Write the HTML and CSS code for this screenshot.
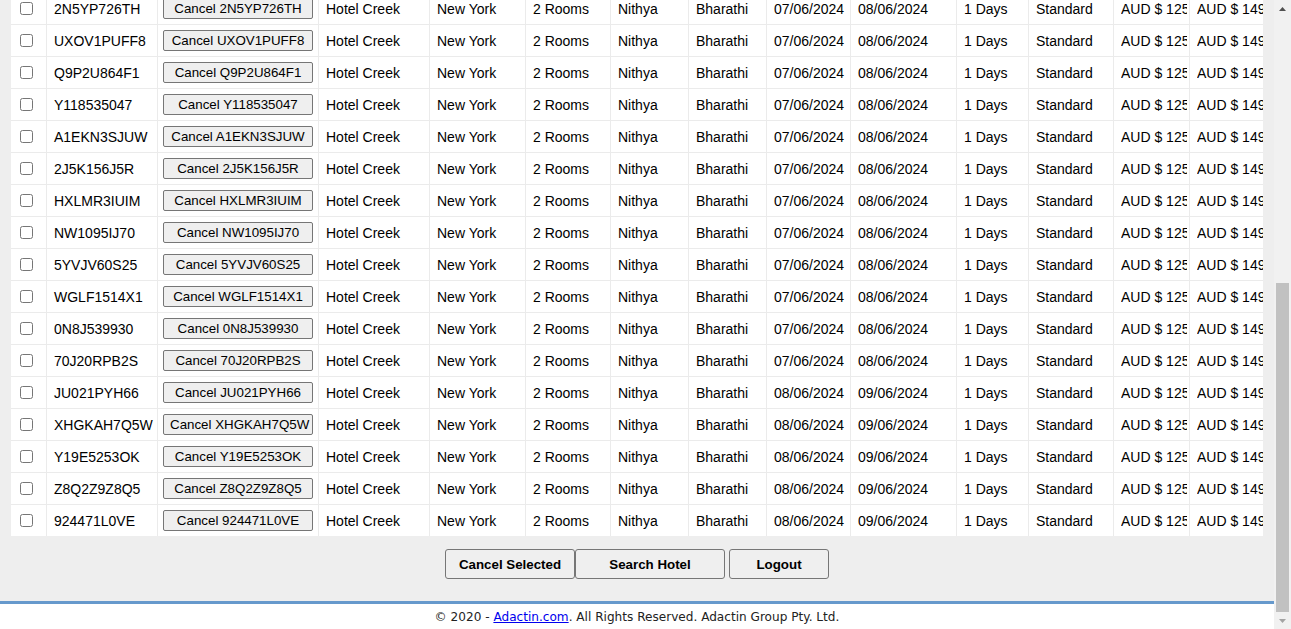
FILE: index.html
```html
<!DOCTYPE html>
<html lang="en">
<head>
<meta charset="utf-8">
<title>Booked Itinerary</title>
<link rel="stylesheet" href="styles.css">
</head>
<body>
<div class="viewport">
  <div class="page">
    <div class="results">
      <div class="table-clip">
        <table class="grid">
          <tbody>
            <tr><td class="chk-cell"><input type="checkbox" class="chk"></td><td>2N5YP726TH</td><td class="btn-cell"><button class="cancel">Cancel 2N5YP726TH</button></td><td>Hotel Creek</td><td>New York</td><td>2 Rooms</td><td>Nithya</td><td>Bharathi</td><td>07/06/2024</td><td>08/06/2024</td><td>1 Days</td><td>Standard</td><td><span class="clip">AUD $ 125</span></td><td><span class="clip">AUD $ 149</span></td></tr>
            <tr><td class="chk-cell"><input type="checkbox" class="chk"></td><td>UXOV1PUFF8</td><td class="btn-cell"><button class="cancel">Cancel UXOV1PUFF8</button></td><td>Hotel Creek</td><td>New York</td><td>2 Rooms</td><td>Nithya</td><td>Bharathi</td><td>07/06/2024</td><td>08/06/2024</td><td>1 Days</td><td>Standard</td><td><span class="clip">AUD $ 125</span></td><td><span class="clip">AUD $ 149</span></td></tr>
            <tr><td class="chk-cell"><input type="checkbox" class="chk"></td><td>Q9P2U864F1</td><td class="btn-cell"><button class="cancel">Cancel Q9P2U864F1</button></td><td>Hotel Creek</td><td>New York</td><td>2 Rooms</td><td>Nithya</td><td>Bharathi</td><td>07/06/2024</td><td>08/06/2024</td><td>1 Days</td><td>Standard</td><td><span class="clip">AUD $ 125</span></td><td><span class="clip">AUD $ 149</span></td></tr>
            <tr><td class="chk-cell"><input type="checkbox" class="chk"></td><td>Y118535047</td><td class="btn-cell"><button class="cancel">Cancel Y118535047</button></td><td>Hotel Creek</td><td>New York</td><td>2 Rooms</td><td>Nithya</td><td>Bharathi</td><td>07/06/2024</td><td>08/06/2024</td><td>1 Days</td><td>Standard</td><td><span class="clip">AUD $ 125</span></td><td><span class="clip">AUD $ 149</span></td></tr>
            <tr><td class="chk-cell"><input type="checkbox" class="chk"></td><td>A1EKN3SJUW</td><td class="btn-cell"><button class="cancel">Cancel A1EKN3SJUW</button></td><td>Hotel Creek</td><td>New York</td><td>2 Rooms</td><td>Nithya</td><td>Bharathi</td><td>07/06/2024</td><td>08/06/2024</td><td>1 Days</td><td>Standard</td><td><span class="clip">AUD $ 125</span></td><td><span class="clip">AUD $ 149</span></td></tr>
            <tr><td class="chk-cell"><input type="checkbox" class="chk"></td><td>2J5K156J5R</td><td class="btn-cell"><button class="cancel">Cancel 2J5K156J5R</button></td><td>Hotel Creek</td><td>New York</td><td>2 Rooms</td><td>Nithya</td><td>Bharathi</td><td>07/06/2024</td><td>08/06/2024</td><td>1 Days</td><td>Standard</td><td><span class="clip">AUD $ 125</span></td><td><span class="clip">AUD $ 149</span></td></tr>
            <tr><td class="chk-cell"><input type="checkbox" class="chk"></td><td>HXLMR3IUIM</td><td class="btn-cell"><button class="cancel">Cancel HXLMR3IUIM</button></td><td>Hotel Creek</td><td>New York</td><td>2 Rooms</td><td>Nithya</td><td>Bharathi</td><td>07/06/2024</td><td>08/06/2024</td><td>1 Days</td><td>Standard</td><td><span class="clip">AUD $ 125</span></td><td><span class="clip">AUD $ 149</span></td></tr>
            <tr><td class="chk-cell"><input type="checkbox" class="chk"></td><td>NW1095IJ70</td><td class="btn-cell"><button class="cancel">Cancel NW1095IJ70</button></td><td>Hotel Creek</td><td>New York</td><td>2 Rooms</td><td>Nithya</td><td>Bharathi</td><td>07/06/2024</td><td>08/06/2024</td><td>1 Days</td><td>Standard</td><td><span class="clip">AUD $ 125</span></td><td><span class="clip">AUD $ 149</span></td></tr>
            <tr><td class="chk-cell"><input type="checkbox" class="chk"></td><td>5YVJV60S25</td><td class="btn-cell"><button class="cancel">Cancel 5YVJV60S25</button></td><td>Hotel Creek</td><td>New York</td><td>2 Rooms</td><td>Nithya</td><td>Bharathi</td><td>07/06/2024</td><td>08/06/2024</td><td>1 Days</td><td>Standard</td><td><span class="clip">AUD $ 125</span></td><td><span class="clip">AUD $ 149</span></td></tr>
            <tr><td class="chk-cell"><input type="checkbox" class="chk"></td><td>WGLF1514X1</td><td class="btn-cell"><button class="cancel">Cancel WGLF1514X1</button></td><td>Hotel Creek</td><td>New York</td><td>2 Rooms</td><td>Nithya</td><td>Bharathi</td><td>07/06/2024</td><td>08/06/2024</td><td>1 Days</td><td>Standard</td><td><span class="clip">AUD $ 125</span></td><td><span class="clip">AUD $ 149</span></td></tr>
            <tr><td class="chk-cell"><input type="checkbox" class="chk"></td><td>0N8J539930</td><td class="btn-cell"><button class="cancel">Cancel 0N8J539930</button></td><td>Hotel Creek</td><td>New York</td><td>2 Rooms</td><td>Nithya</td><td>Bharathi</td><td>07/06/2024</td><td>08/06/2024</td><td>1 Days</td><td>Standard</td><td><span class="clip">AUD $ 125</span></td><td><span class="clip">AUD $ 149</span></td></tr>
            <tr><td class="chk-cell"><input type="checkbox" class="chk"></td><td>70J20RPB2S</td><td class="btn-cell"><button class="cancel">Cancel 70J20RPB2S</button></td><td>Hotel Creek</td><td>New York</td><td>2 Rooms</td><td>Nithya</td><td>Bharathi</td><td>07/06/2024</td><td>08/06/2024</td><td>1 Days</td><td>Standard</td><td><span class="clip">AUD $ 125</span></td><td><span class="clip">AUD $ 149</span></td></tr>
            <tr><td class="chk-cell"><input type="checkbox" class="chk"></td><td>JU021PYH66</td><td class="btn-cell"><button class="cancel">Cancel JU021PYH66</button></td><td>Hotel Creek</td><td>New York</td><td>2 Rooms</td><td>Nithya</td><td>Bharathi</td><td>08/06/2024</td><td>09/06/2024</td><td>1 Days</td><td>Standard</td><td><span class="clip">AUD $ 125</span></td><td><span class="clip">AUD $ 149</span></td></tr>
            <tr><td class="chk-cell"><input type="checkbox" class="chk"></td><td>XHGKAH7Q5W</td><td class="btn-cell"><button class="cancel">Cancel XHGKAH7Q5W</button></td><td>Hotel Creek</td><td>New York</td><td>2 Rooms</td><td>Nithya</td><td>Bharathi</td><td>08/06/2024</td><td>09/06/2024</td><td>1 Days</td><td>Standard</td><td><span class="clip">AUD $ 125</span></td><td><span class="clip">AUD $ 149</span></td></tr>
            <tr><td class="chk-cell"><input type="checkbox" class="chk"></td><td>Y19E5253OK</td><td class="btn-cell"><button class="cancel">Cancel Y19E5253OK</button></td><td>Hotel Creek</td><td>New York</td><td>2 Rooms</td><td>Nithya</td><td>Bharathi</td><td>08/06/2024</td><td>09/06/2024</td><td>1 Days</td><td>Standard</td><td><span class="clip">AUD $ 125</span></td><td><span class="clip">AUD $ 149</span></td></tr>
            <tr><td class="chk-cell"><input type="checkbox" class="chk"></td><td>Z8Q2Z9Z8Q5</td><td class="btn-cell"><button class="cancel">Cancel Z8Q2Z9Z8Q5</button></td><td>Hotel Creek</td><td>New York</td><td>2 Rooms</td><td>Nithya</td><td>Bharathi</td><td>08/06/2024</td><td>09/06/2024</td><td>1 Days</td><td>Standard</td><td><span class="clip">AUD $ 125</span></td><td><span class="clip">AUD $ 149</span></td></tr>
            <tr><td class="chk-cell"><input type="checkbox" class="chk"></td><td>924471L0VE</td><td class="btn-cell"><button class="cancel">Cancel 924471L0VE</button></td><td>Hotel Creek</td><td>New York</td><td>2 Rooms</td><td>Nithya</td><td>Bharathi</td><td>08/06/2024</td><td>09/06/2024</td><td>1 Days</td><td>Standard</td><td><span class="clip">AUD $ 125</span></td><td><span class="clip">AUD $ 149</span></td></tr>
          </tbody>
        </table>
      </div>
    </div>
    <div class="actions">
      <button class="act act-cancel">Cancel Selected</button>
      <button class="act act-search">Search Hotel</button>
      <button class="act act-logout">Logout</button>
    </div>
    <footer class="footer">© 2020 - <a href="#">Adactin.com</a>. All Rights Reserved. Adactin Group Pty. Ltd.</footer>
  </div>
  <div class="scrollbar">
    <div class="sb-btn"><svg width="7" height="4" viewBox="0 0 7 4"><polygon points="0,4 3.5,0 7,4" fill="#505050"/></svg></div>
    <div class="sb-track"><div class="sb-thumb"></div></div>
    <div class="sb-btn"><svg width="7" height="4" viewBox="0 0 7 4"><polygon points="0,0 7,0 3.5,4" fill="#a3a3a3"/></svg></div>
  </div>
</div>
</body>
</html>
```

FILE: styles.css
```css
html, body {
  margin: 0;
  padding: 0;
  height: 100%;
  overflow: hidden;
}

body {
  font-family: "Liberation Sans", Arial, sans-serif;
  background: #eeeeee;
}

.viewport {
  display: flex;
  width: 1291px;
  height: 629px;
}

.page {
  width: 1274px;
  display: flex;
  flex-direction: column;
  background: #eeeeee;
}

.results {
  flex: 1;
  min-height: 0;
  overflow: hidden;
  display: flex;
  flex-direction: column;
  justify-content: flex-end;
  padding: 0 11px;
}

.table-clip {
  flex: none;
  width: 1252px;
  overflow: hidden;
}

.grid {
  table-layout: fixed;
  width: 1254px;
  border-collapse: separate;
  border-spacing: 0;
  background: #ffffff;
  font-size: 14px;
  color: #000000;
}

.grid td {
  box-sizing: border-box;
  border-top: 1px solid #ebebeb;
  padding: 2px 2px 0 7px;
  line-height: 29px;
  white-space: nowrap;
  overflow: hidden;
  vertical-align: top;
}

.grid td + td {
  border-left: 1px solid #ebebeb;
}

.grid td:nth-child(1) { width: 35px; }
.grid td:nth-child(2) { width: 111px; }
.grid td:nth-child(3) { width: 161px; }
.grid td:nth-child(4) { width: 111px; }
.grid td:nth-child(5) { width: 96px; }
.grid td:nth-child(6) { width: 85px; }
.grid td:nth-child(7) { width: 78px; }
.grid td:nth-child(8) { width: 78px; }
.grid td:nth-child(9) { width: 84px; }
.grid td:nth-child(10) { width: 106px; }
.grid td:nth-child(11) { width: 72px; }
.grid td:nth-child(12) { width: 85px; }
.grid td:nth-child(13) { width: 76px; }
.grid td:nth-child(14) { width: 76px; }

.grid td.chk-cell {
  padding: 0 0 0 9px;
  vertical-align: middle;
}

.chk {
  display: block;
  width: 13px;
  height: 13px;
  margin: 0;
}

.grid td.btn-cell {
  padding: 0 0 0 5px;
  vertical-align: middle;
}

.cancel {
  display: block;
  box-sizing: border-box;
  width: 150px;
  height: 21px;
  padding: 0 6px;
  border: 1px solid #767676;
  border-radius: 2px;
  background: #efefef;
  color: #000000;
  font: 13.333px "Liberation Sans", Arial, sans-serif;
  white-space: nowrap;
  overflow: hidden;
  text-align: center;
}

.clip {
  display: block;
  overflow: hidden;
}

.actions {
  flex: none;
  display: flex;
  justify-content: center;
  padding: 13px 0 22px;
}

.act {
  box-sizing: border-box;
  height: 30px;
  padding: 0;
  border: 1px solid #767676;
  border-radius: 3px;
  background: #efefef;
  color: #000000;
  font: bold 13.333px "Liberation Sans", Arial, sans-serif;
}

.act-cancel { width: 130px; }
.act-search { width: 150px; }
.act-logout { width: 100px; margin-left: 4px; }

.footer {
  flex: none;
  height: 24px;
  padding-top: 1px;
  border-top: 3px solid #6699cc;
  background: #ffffff;
  text-align: center;
  line-height: 25px;
  font-family: "DejaVu Sans", Verdana, sans-serif;
  font-size: 12.1px;
  color: #222222;
}

.footer a {
  color: #0000ee;
  text-decoration: underline;
}

.scrollbar {
  width: 17px;
  flex: none;
  display: flex;
  flex-direction: column;
  background: #f1f1f1;
}

.sb-btn {
  height: 17px;
  flex: none;
  display: flex;
  align-items: center;
  justify-content: center;
}

.sb-track {
  flex: 1;
  display: flex;
  flex-direction: column;
  justify-content: flex-end;
}

.sb-thumb {
  height: 329px;
  margin: 0 2px;
  background: #c1c1c1;
}
```
